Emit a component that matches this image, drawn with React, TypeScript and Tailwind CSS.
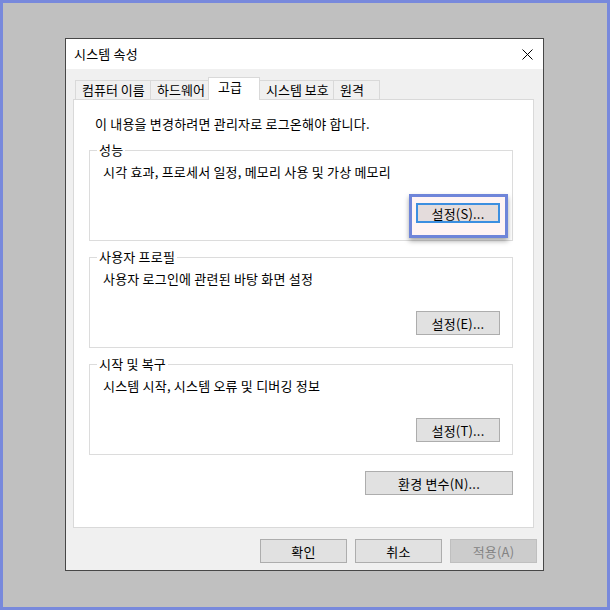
import React from "react"

const font = "font-['Noto_Sans_CJK_KR','Noto_Sans',sans-serif]"

function WinButton({
  label,
  width,
  disabled = false,
}: {
  label: string
  width: string
  disabled?: boolean
}) {
  return (
    <div
      className={`${width} flex h-[24px] items-center justify-center border leading-none ${
        disabled
          ? "border-[#bfbfbf] bg-[#cccccc] text-[#838383]"
          : "border-[#adadad] bg-[#e1e1e1] text-black"
      }`}
    >
      {label}
    </div>
  )
}

function GroupBox({
  title,
  text,
  children,
}: {
  title: string
  text: string
  children: React.ReactNode
}) {
  return (
    <div className="relative flex h-[91px] w-[424px] flex-col border border-[#dcdcdc] pt-[13px] pr-[12px] pl-[13px]">
      <span className="absolute -top-[9px] left-[7px] bg-white px-[2px] leading-[16px]">
        {title}
      </span>
      <p className="leading-[16px]">{text}</p>
      {children}
    </div>
  )
}

const tabs = [
  { label: "컴퓨터 이름", w: "w-[76px] border-l" },
  { label: "하드웨어", w: "w-[58px]" },
  { label: "고급", w: "w-[52px]", active: true },
  { label: "시스템 보호", w: "w-[74px]" },
  { label: "원격", w: "w-[46px]" },
]

export default function App() {
  return (
    <div
      className={`h-[610px] w-[610px] border-[3px] border-[#7889dc] bg-[#c0c0c0] pt-[35px] pl-[62px] text-[13px] tracking-[0.2px] text-black ${font}`}
    >
      <div className="flex h-[533px] w-[479px] flex-col border border-[#474747] bg-[#f0f0f0]">
        {/* 제목 표시줄 */}
        <div className="flex h-[30px] items-center justify-between bg-white pr-[9px] pl-[8px]">
          <span className="leading-[16px]">시스템 속성</span>
          <svg width="11" height="11" viewBox="0 0 11 11" className="mr-[1px]">
            <path d="M0.5 0.5 L10.5 10.5 M10.5 0.5 L0.5 10.5" stroke="#000" strokeWidth="1" />
          </svg>
        </div>

        <div className="flex flex-1 flex-col pt-[8px] pr-[9px] pl-[7px]">
          {/* 탭 */}
          <div className="flex h-[22px] items-end pl-[2px] tracking-normal">
            {tabs.map((t) =>
              t.active ? (
                <div
                  key={t.label}
                  className="relative z-10 -mb-px -ml-px h-[23px] w-[52px] border-x border-t border-[#d9d9d9] bg-white pt-[1px] pl-[9px] leading-[16px]"
                >
                  {t.label}
                </div>
              ) : (
                <div
                  key={t.label}
                  className={`${t.w} h-[19px] border-t border-r border-[#d9d9d9] bg-[#f0f0f0] pt-[1px] pl-[6px] leading-[16px] whitespace-nowrap`}
                >
                  {t.label}
                </div>
              )
            )}
          </div>

          {/* 패널 */}
          <div className="flex h-[429px] w-[461px] flex-col border border-[#d9d9d9] bg-white">
            <p className="pt-[16px] pl-[21px] leading-[16px]">
              이 내용을 변경하려면 관리자로 로그온해야 합니다.
            </p>

            <div className="mt-[18px] flex flex-col gap-[16px] pl-[15px]">
              <GroupBox title="성능" text="시각 효과, 프로세서 일정, 메모리 사용 및 가상 메모리">
                <div className="relative mt-[23px] self-end">
                  <div className="absolute -top-[9px] -right-[8px] -bottom-[15px] -left-[7px] border-[3px] border-[#6f85d9] bg-[#fff4f4] shadow-[0_3px_5px_rgba(0,0,0,0.35)]" />
                  <div className="relative flex h-[20px] w-[84px] items-center justify-center border-2 border-[#3d8fe0] bg-[#e4dcdc] leading-none">
                    설정(S)...
                  </div>
                </div>
              </GroupBox>

              <GroupBox title="사용자 프로필" text="사용자 로그인에 관련된 바탕 화면 설정">
                <div className="mt-[24px] self-end">
                  <WinButton label="설정(E)..." width="w-[84px]" />
                </div>
              </GroupBox>

              <GroupBox title="시작 및 복구" text="시스템 시작, 시스템 오류 및 디버깅 정보">
                <div className="mt-[24px] self-end">
                  <WinButton label="설정(T)..." width="w-[84px]" />
                </div>
              </GroupBox>
            </div>

            <div className="mt-[16px] flex justify-end pr-[20px]">
              <WinButton label="환경 변수(N)..." width="w-[148px]" />
            </div>
          </div>

          {/* 하단 버튼 */}
          <div className="mt-[11px] -mr-[3px] flex justify-end gap-[8px]">
            <WinButton label="확인" width="w-[87px]" />
            <WinButton label="취소" width="w-[87px]" />
            <WinButton label="적용(A)" width="w-[87px]" disabled />
          </div>
        </div>
      </div>
    </div>
  )
}
